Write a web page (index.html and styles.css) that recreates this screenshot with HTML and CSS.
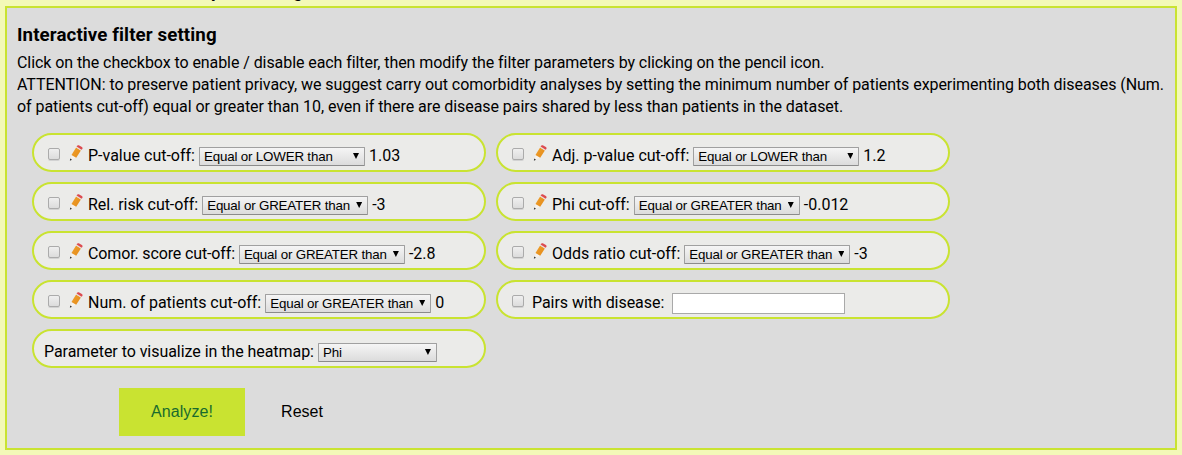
FILE: index.html
```html
<!DOCTYPE html>
<html lang="en">
<head>
<meta charset="utf-8">
<title>Interactive filter setting</title>
<link rel="stylesheet" href="styles.css">
</head>
<body>
<svg class="defs" width="0" height="0">
  <defs>
    <linearGradient id="lead" x1="0" y1="0" x2="1" y2="1"><stop offset="0" stop-color="#f0a02c"/><stop offset="1" stop-color="#e38b1a"/></linearGradient>
    <symbol id="pencil" viewBox="0 0 14 17">
      <path fill="#f6f2ee" d="M2.6 9.8 7 12.7 2 15z"/>
      <path fill="url(#lead)" d="M7.1 2.4 11.9 5.5 7.2 12.8 2.5 9.9z"/>
      <path fill="#e9dedb" d="M7.6 1.5 12.5 4.7 11.9 5.5 7.1 2.4z"/>
      <path fill="#dc4b50" d="M8 .8Q8.7-.2 9.8.3L12.9 2.1Q14 2.9 13.3 3.9L12.6 4.7 7.6 1.5z"/>
      <path fill="#333" d="M1.2 13.4 3 14.7 .9 15.8z"/>
    </symbol>
  </defs>
</svg>
<div class="previous"><span class="cut-p">p</span><span class="cut-g">g</span></div>
<main class="panel">
  <h3 class="title">Interactive filter setting</h3>
  <p class="intro"><span class="l1">Click on the checkbox to enable / disable each filter, then modify the filter parameters by clicking on the pencil icon.</span><br><span class="l2">ATTENTION: to preserve patient privacy, we suggest carry out comorbidity analyses by setting the minimum number of patients experimenting both diseases (Num.</span><br><span class="l3">of patients cut-off) equal or greater than 10, even if there are disease pairs shared by less than patients in the dataset.</span></p>
  <div class="filters">
    <div class="pill"><i class="check"></i><svg class="pencil"><use href="#pencil"/></svg><span class="label">P-value cut-off:</span><span class="select">Equal or LOWER than<i class="arrow"></i></span><span class="value">1.03</span></div>
    <div class="pill"><i class="check"></i><svg class="pencil"><use href="#pencil"/></svg><span class="label">Adj. p-value cut-off:</span><span class="select">Equal or LOWER than<i class="arrow"></i></span><span class="value">1.2</span></div>
    <div class="pill"><i class="check"></i><svg class="pencil"><use href="#pencil"/></svg><span class="label tight">Rel. risk cut-off:</span><span class="select">Equal or GREATER than<i class="arrow"></i></span><span class="value">-3</span></div>
    <div class="pill"><i class="check"></i><svg class="pencil"><use href="#pencil"/></svg><span class="label">Phi cut-off:</span><span class="select">Equal or GREATER than<i class="arrow"></i></span><span class="value">-0.012</span></div>
    <div class="pill"><i class="check"></i><svg class="pencil"><use href="#pencil"/></svg><span class="label tighter">Comor. score cut-off:</span><span class="select">Equal or GREATER than<i class="arrow"></i></span><span class="value">-2.8</span></div>
    <div class="pill"><i class="check"></i><svg class="pencil"><use href="#pencil"/></svg><span class="label">Odds ratio cut-off:</span><span class="select">Equal or GREATER than<i class="arrow"></i></span><span class="value">-3</span></div>
    <div class="pill"><i class="check"></i><svg class="pencil"><use href="#pencil"/></svg><span class="label slight">Num. of patients cut-off:</span><span class="select">Equal or GREATER than<i class="arrow"></i></span><span class="value">0</span></div>
    <div class="pill"><i class="check wide"></i><span class="label tight">Pairs with disease:</span><input class="field" type="text" aria-label="Pairs with disease"></div>
    <div class="pill plain"><span class="label tight">Parameter to visualize in the heatmap:</span><span class="select short">Phi<i class="arrow"></i></span></div>
  </div>
  <div class="actions"><button class="btn primary">Analyze!</button><button class="btn">Reset</button></div>
</main>
</body>
</html>
```
FILE: styles.css
```css
* { box-sizing: border-box; }
body {
  margin: 0;
  height: 455px;
  overflow: hidden;
  background: #f3f9b8;
  font: 16px/22px Roboto, sans-serif;
  color: #000;
}
.defs { position: absolute; }
.previous {
  height: 6px;
  overflow: hidden;
  position: relative;
  font-weight: bold;
  font-size: 18px;
}
.cut-p, .cut-g { position: absolute; top: -20px; line-height: 22px; }
.cut-p { left: 211px; }
.cut-g { left: 293px; }
.panel {
  width: 1172px;
  height: 444px;
  margin-left: 5px;
  padding: 15px 10px 0;
  border: 2px solid #c9e331;
  background: #dcdcdc;
}
.title { margin: 0; font-size: 18.72px; line-height: 24px; font-weight: bold; letter-spacing: 0.1px; }
.intro { margin: 5px 0 0; white-space: nowrap; }
.l1 { letter-spacing: -0.074px; }
.l2 { letter-spacing: -0.065px; }
.l3 { letter-spacing: -0.06px; }
.filters {
  display: grid;
  grid-template-columns: 454px 454px;
  grid-auto-rows: 39px;
  gap: 10px;
  margin: 15px 0 0 15px;
}
.pill {
  display: flex;
  align-items: flex-start;
  padding: 9px 0 0 14px;
  border: 2px solid #c9e331;
  border-radius: 20px;
  background: #ebebe9;
  white-space: nowrap;
}
.plain { padding-left: 10px; }
.label, .value { margin-top: 1px; }
.tight { letter-spacing: -0.05px; }
.tighter { letter-spacing: -0.14px; }
.slight { letter-spacing: -0.02px; }
.check {
  flex: none;
  width: 12px;
  height: 12px;
  margin: 4px 9px 0 0;
  border: 1px solid #ababab;
  border-radius: 2px;
  background: linear-gradient(#efefef, #dcdcdc);
  box-shadow: 0 1px 0 #d2d2d2;
}
.wide { margin-right: 8px; }
.pencil { flex: none; width: 14px; height: 17px; margin: 1px 5px 0 0; }
.select {
  display: flex;
  justify-content: space-between;
  width: 166px;
  height: 19px;
  margin: 3px 4px 0;
  padding: 0 5px 0 4px;
  border: 1px solid #a0a0a0;
  border-bottom-color: #8b8b8b;
  border-radius: 1px;
  background: linear-gradient(#f5f5f5, #dcdcdc);
  font: 13.33px/18px "Liberation Sans", Arial, sans-serif;
  letter-spacing: -0.17px;
}
.short { width: 119px; }
.arrow {
  width: 6px;
  height: 6px;
  margin-top: 5px;
  background: #000;
  clip-path: polygon(0 0, 100% 0, 50% 100%);
}
.field {
  width: 173px;
  height: 21px;
  margin: 2px 0 0 8px;
  border: 1px solid #a9a9a9;
  background: #fff;
}
.actions { display: flex; margin: 20px 0 0 102px; }
.btn {
  height: 48px;
  width: 126px;
  padding: 0;
  border: 0;
  background: transparent;
  font: 16px "Liberation Sans", Arial, sans-serif;
  color: #000;
}
.primary { background: #c9e331; color: #196b2d; letter-spacing: 0.1px; }
.btn + .btn { margin-left: -6px; }
```
